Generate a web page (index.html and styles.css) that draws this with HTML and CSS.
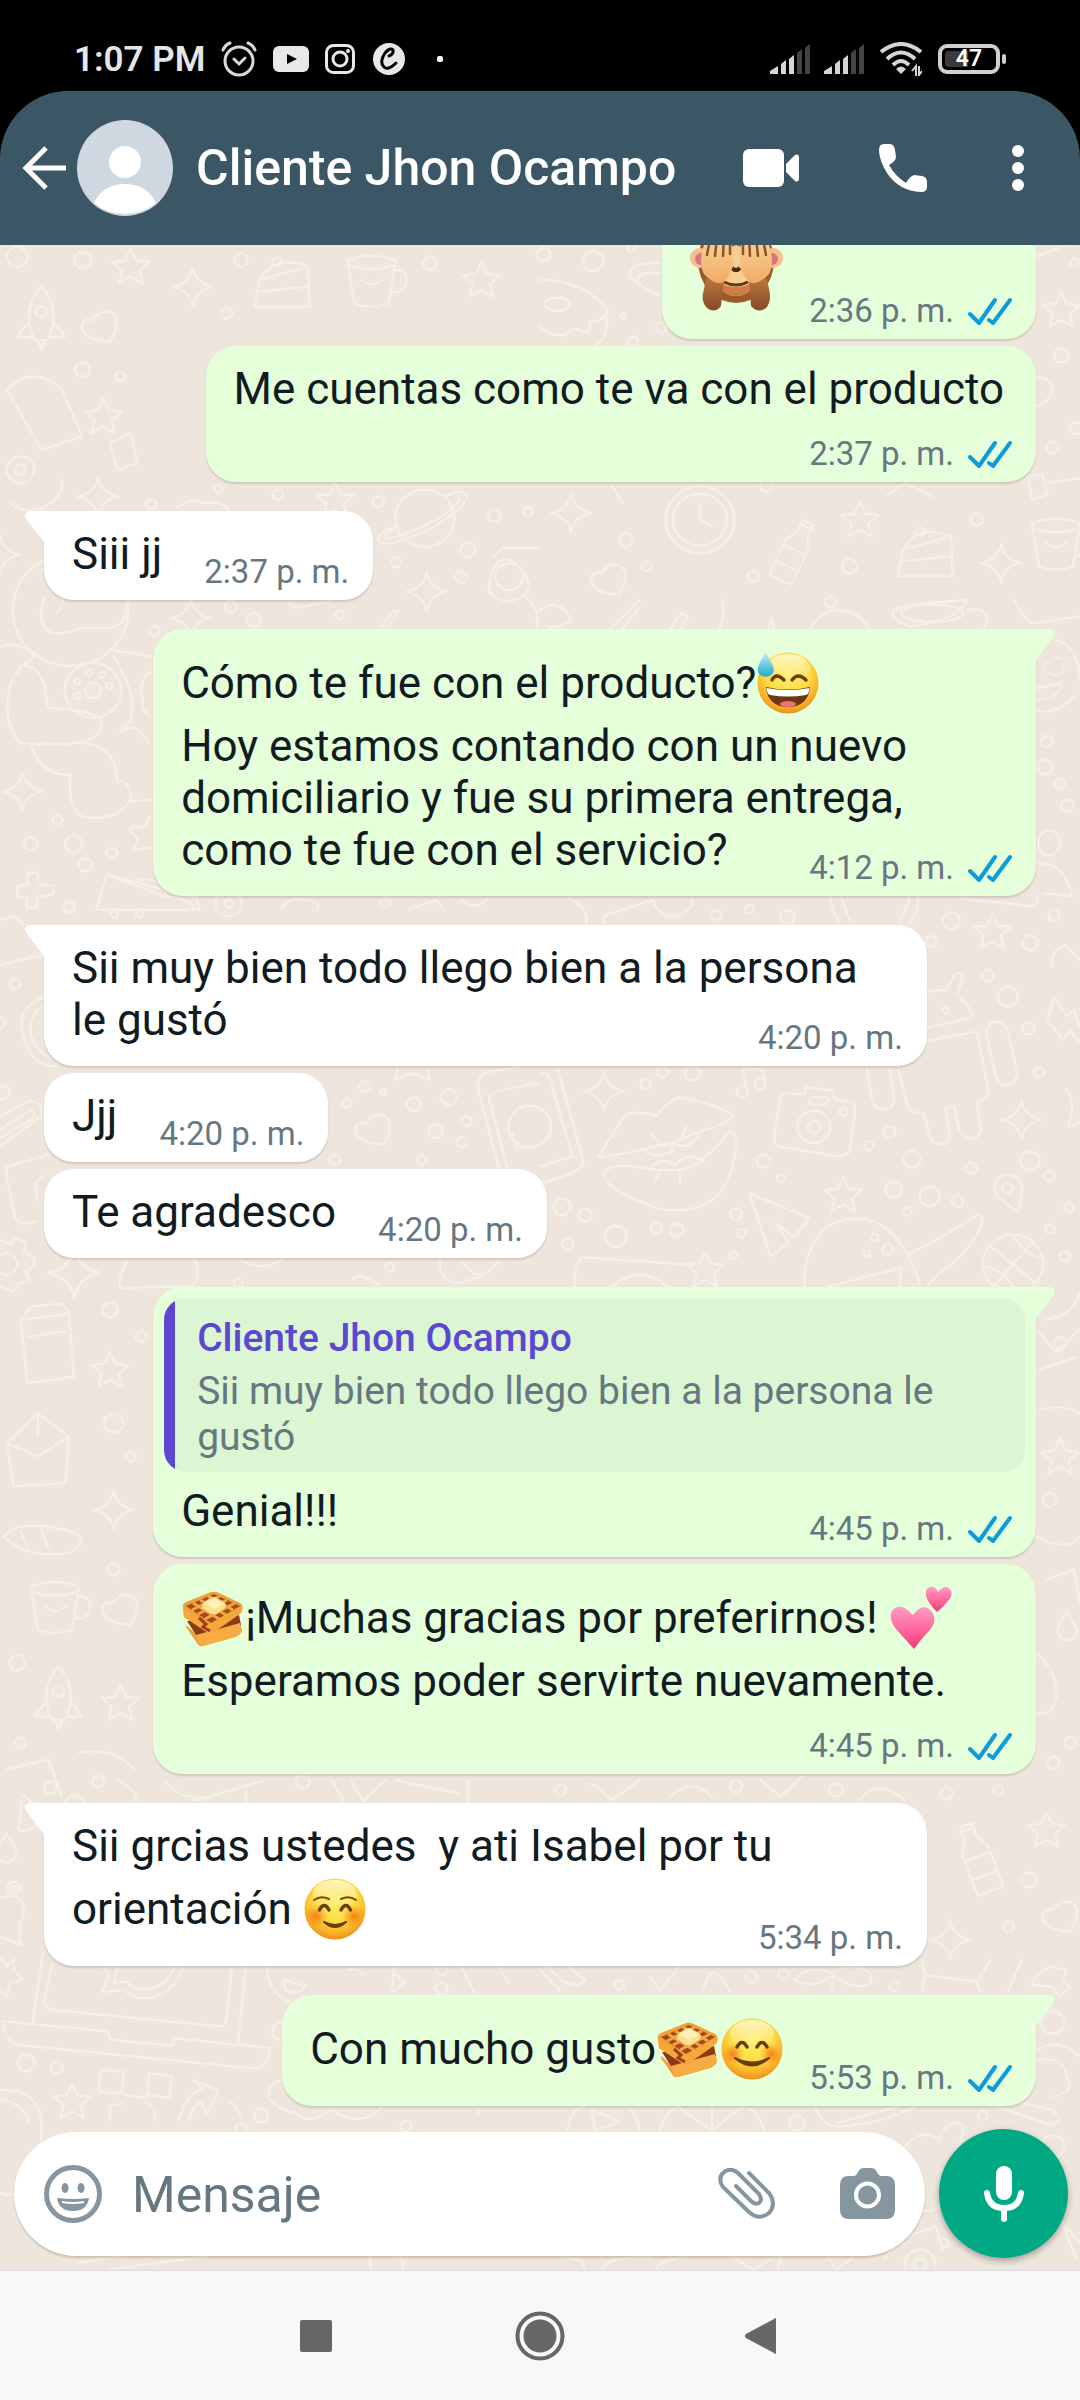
FILE: index.html
```html
<!DOCTYPE html>
<html lang="es">
<head>
<meta charset="utf-8">
<meta name="viewport" content="width=device-width, initial-scale=1">
<title>Cliente Jhon Ocampo</title>
<link rel="stylesheet" href="styles.css">
</head>
<body>
<svg class="sprite" aria-hidden="true">
  <defs>
    <radialGradient id="face" cx=".5" cy=".35" r=".65">
      <stop offset="0" stop-color="#fdf06a"/><stop offset=".55" stop-color="#fcdc42"/><stop offset=".85" stop-color="#f9ae26"/><stop offset="1" stop-color="#ee8d1c"/>
    </radialGradient>
    <linearGradient id="shine" x1="0" y1="0" x2="0" y2="1">
      <stop offset="0" stop-color="#fff6cf" stop-opacity=".9"/><stop offset="1" stop-color="#fff6cf" stop-opacity="0"/>
    </linearGradient>
    <radialGradient id="cheek"><stop offset="0" stop-color="#f4660c" stop-opacity=".75"/><stop offset="1" stop-color="#f4760c" stop-opacity="0"/></radialGradient>
    <linearGradient id="drop" x1="0" y1="0" x2="0" y2="1"><stop offset="0" stop-color="#bfeff5"/><stop offset="1" stop-color="#22a9cf"/></linearGradient>
    <linearGradient id="pink" x1="0" y1="0" x2="0" y2="1"><stop offset="0" stop-color="#ff9cc4"/><stop offset=".6" stop-color="#fd6299"/><stop offset="1" stop-color="#ee3873"/></linearGradient>
    <linearGradient id="arm" x1="0" y1="0" x2="0" y2="1"><stop offset="0" stop-color="#b9753c"/><stop offset="1" stop-color="#874a28"/></linearGradient>
    <linearGradient id="hand" x1="0" y1="0" x2="0" y2="1"><stop offset="0" stop-color="#fbd29a"/><stop offset="1" stop-color="#f0ac66"/></linearGradient>
    <symbol id="head" viewBox="0 0 64 74">
      <circle cx="32" cy="37" r="30.5" fill="url(#face)"/>
      <ellipse cx="32" cy="22" rx="22" ry="14" fill="url(#shine)"/>
    </symbol>
    <symbol id="e-sweat" viewBox="0 0 64 74">
      <use href="#head"/>
      <path d="M16 34Q20 26 28 34M36 34Q42 26 50 34" fill="none" stroke="#6b3d06" stroke-width="3.4" stroke-linecap="round"/>
      <path d="M10 41Q32 46 54 41Q52 61 32 61Q12 61 10 41Z" fill="#6a3710"/>
      <path d="M10.500 42Q32 46 53.500 42Q53 48 50 49Q32 52 14 49Q11 48 10.500 42Z" fill="#fff"/>
      <ellipse cx="32" cy="58" rx="8" ry="3" fill="#f0707a"/>
      <path d="M9.500 6.500Q18 20 18 24A8.300 7.500 0 0 1 1.500 24Q1.500 19 9.500 6.500Z" fill="url(#drop)"/>
    </symbol>
    <symbol id="e-blush" viewBox="0 0 64 74">
      <use href="#head"/>
      <circle cx="13" cy="42" r="11" fill="url(#cheek)"/><circle cx="51" cy="42" r="11" fill="url(#cheek)"/>
      <path d="M17 35Q22 26 27 35M37 35Q42 26 47 35" fill="none" stroke="#6b3d06" stroke-width="3.400" stroke-linecap="round"/>
      <path d="M15 46Q32 61 49 46Q32 55 15 46Z" fill="#6b3d06" stroke="#6b3d06" stroke-width="2" stroke-linejoin="round"/>
    </symbol>
    <symbol id="e-relaxed" viewBox="0 0 64 74">
      <use href="#head"/>
      <circle cx="13" cy="44" r="12" fill="url(#cheek)"/><circle cx="51" cy="44" r="12" fill="url(#cheek)"/>
      <path d="M11 28Q18 23 26 27M38 27Q46 23 53 28" fill="none" stroke="#7a4a08" stroke-width="2" stroke-linecap="round"/>
      <path d="M16.500 38Q21 29 26 38M38 38Q43 29 47.500 38" fill="none" stroke="#6b3d06" stroke-width="3.400" stroke-linecap="round"/>
      <path d="M21 50Q32 60 43 50Q32 56 21 50Z" fill="#6b3d06" stroke="#6b3d06" stroke-width="2" stroke-linejoin="round"/>
    </symbol>
    <symbol id="e-waffle" viewBox="0 0 64 74">
      <path d="M5 44L14 52L58 38L61 49Q60 54 54 56L22 65Q18 66 16 62L5 46Z" fill="#ef9f33"/>
      <path d="M6 40L40 40L58 34L60 44L24 56L15 54Z" fill="#8a3b12"/>
      <path d="M15 54L59 42L61 50Q58 55 54 56L22 65Q17 64 15 54Z" fill="#f6ac42"/>
      <path d="M2 27Q1 23 5 21L30 11Q34 10 38 12L59 22Q63 24 61 30L34 50Q30 54 25 50L3 36Z" fill="#f0a038"/>
      <path d="M5 25L33 13L59 25L30 42Z" fill="#a44a18"/>
      <path d="M12 22L38 38M19 19L45 34M27 15L52 29M11 29L39 15M17 33L46 19M24 38L54 22" stroke="#f2a746" stroke-width="3" fill="none"/>
      <path d="M2 27L29 43L61 25L61 31Q46 43 32 51Q28 53 24 50L3 36Z" fill="#f5a73c"/>
      <path d="M18 37L25 43L22 46L29 50" fill="none" stroke="#9b3f14" stroke-width="3"/>
      <path d="M22 22Q30 15 34 16L43 21Q46 23 44 27L35 33Q31 34 27 31L21 27Z" fill="#fbe08e"/><path d="M23 22L33 17L43 23L33 28Z" fill="#fff0b8"/>
    </symbol>
    <symbol id="e-hearts" viewBox="0 0 64 74">
      <path d="M25 68Q15 57 7 48Q-1 38 3 30Q11 20 24 34Q34 20 43 31Q49 40 40 50Q32 58 25 68Z" fill="url(#pink)"/>
      <path d="M48 31Q39 22 37 15Q36 7 41 6Q46 5 49 11Q56 3 61 8Q65 13 59 20Q54 26 48 31Z" fill="url(#pink)"/>
    </symbol>
    <symbol id="e-monkey" viewBox="0 -6 94 106">
      <ellipse cx="46" cy="42" rx="38" ry="42" fill="#9a5a2c"/>
      <circle cx="10" cy="39" r="10" fill="#f4c08c"/><circle cx="83" cy="39" r="10" fill="#f4c08c"/>
      <circle cx="11" cy="40" r="6" fill="#d9737c"/><circle cx="82" cy="40" r="6" fill="#d9737c"/>
      <path d="M46 26Q66 32 65 62Q60 77 46 77Q32 77 28 62Q27 34 46 26Z" fill="#f5cf92"/>
      <path d="M30 64Q46 72 62 64Q60 77 46 77Q32 77 30 64Z" fill="#cf7f45"/>
      <path d="M34 63Q46 69 58 63" fill="none" stroke="#6b3312" stroke-width="3"/>
      <path d="M42 49Q46 53 50 49" fill="none" stroke="#4a2a15" stroke-width="4"/>
      <path d="M16 60L34 62L31 87Q25 95 17 89Q10 82 14 70Z" fill="url(#arm)"/>
      <path d="M77 60L59 62L61 87Q68 95 76 89Q82 82 79 70Z" fill="url(#arm)"/>
      <path d="M14 26Q28 12 42 26Q46 46 39 56Q35 64 30 64Q22 64 14 55Q8 44 14 26Z" fill="url(#hand)"/>
      <path d="M79 26Q65 12 51 26Q47 46 54 56Q58 64 63 64Q71 64 79 55Q85 44 79 26Z" fill="url(#hand)"/>
      <path d="M20 20L17 36M27 18L25 37M34 18L33 37M40 21L40 35M73 20L76 36M66 18L68 37M59 18L60 37M53 21L53 35" fill="none" stroke="#8e5426" stroke-width="2.500" stroke-linecap="round"/>
    </symbol>
    <symbol id="ticks" viewBox="0 0 44 28">
      <path d="M2 17L11 26L27 3M21 23L25 26L42 3" fill="none" stroke="#0d9bdb" stroke-width="4" stroke-linecap="round" stroke-linejoin="round"/>
    </symbol>
    <symbol id="tail" viewBox="0 0 20 32">
      <path d="M20 0H5Q-3 1 2 9L19 31H20Z" fill="currentColor"/>
    </symbol>
    <symbol id="bars" viewBox="0 0 40 30">
      <path d="M0 30V27L8 22V30ZM11 30V20L16 16V30ZM19 30V15L24 11V30Z" fill="#d6d6d6"/>
      <path d="M27 30V9L32 5V30ZM35 30V4L40 0V30Z" fill="#444"/>
    </symbol>
    <path id="s4" d="M0-58Q8-12 58 0Q10 8 0 58Q-8 12-58 0Q-10-8 0-58Z"/>
    <path id="s5" d="M0-54L16-18L54-14L25 12L34 50L0 30L-34 50L-25 12L-54-14L-16-18Z"/>
    <path id="ht" d="M30 45Q-50 40-52 0Q-50-28-20-20Q0-55 35-40Q65-20 30 45Z"/>
    <path id="dropshape" d="M0-45Q28 0 28 15A28 28 0 0 1-28 15Q-28 0 0-45Z"/>
    <g id="planet"><circle r="86"/><path d="M-80 25Q-150 45-130 72Q-110 90 20 30Q130-40 122-70Q110-92 60-65M-95 35Q-125 55-110 60Q-70 60 30 5Q105-40 100-60"/></g>
    <g id="cup"><path d="M-70-60L-50 70Q0 90 50 70L70-60Q0-85-70-60ZM-68-45Q0-20 68-45M65-30Q110-35 100 15Q85 45 55 35M-30 0Q0 25 30 0"/></g>
    <g id="bottle"><path d="M-40 110L-40-20L-18-60V-100H18V-60L40-20V110ZM-40 0H40M-40 60H40M-22-85H22"/></g>
    <g id="cake"><path d="M-80 70L-65-10L75-50L80 70ZM-65-10Q-20-90 75-50M-72 25L78 10"/><circle cx="-15" cy="-65" r="12"/></g>
    <g id="rocket"><path d="M-20 70Q-60-20 0-90Q60-20 20 70ZM-38 20L-70 60L-25 62M38 20L70 60L25 62M-10 72L0 100L10 72"/><circle cy="-15" r="16"/></g>
  </defs>
</svg>

<div class="screen">
  <div class="statusbar">
    <div class="statusbar__side">
      <span class="clock">1:07 PM</span>
      <svg class="alarm" viewBox="0 0 36 36" fill="none" stroke="#d8d8d8" stroke-width="3" stroke-linecap="round"><circle cx="18" cy="20" r="14"/><path d="M13 18L18 23L24 17M2 9Q4 4 9 2M34 9Q32 4 27 2"/></svg>
      <svg class="youtube" viewBox="0 0 36 26"><rect width="36" height="26" rx="6" fill="#e8e8e8"/><path d="M14 8L24 13L14 18Z" fill="#000"/></svg>
      <svg class="insta" viewBox="0 0 30 30" fill="none" stroke="#e8e8e8" stroke-width="3"><rect x="1.500" y="1.500" width="27" height="27" rx="7"/><circle cx="15" cy="15" r="7"/><circle cx="23" cy="7" r="1" stroke-width="2"/></svg>
      <svg class="brand" viewBox="0 0 32 32"><circle cx="16" cy="16" r="16" fill="#e8e8e8"/><path d="M16 13Q21 11 20 7Q17 4 12 10Q6 19 11 24Q15 28 23 20" fill="none" stroke="#000" stroke-width="3" stroke-linecap="round"/></svg>
      <span class="more-dot"></span>
    </div>
    <div class="statusbar__side">
      <svg class="signal" viewBox="0 0 40 30"><use href="#bars"/></svg>
      <svg class="signal" viewBox="0 0 40 30"><use href="#bars"/></svg>
      <svg class="wifi" viewBox="0 0 42 34" fill="none" stroke="#d6d6d6" stroke-width="4"><path d="M1 10Q21-6 41 10M7 17Q21 4 35 17M13 23Q21 15 29 23"/><path d="M16 27Q21 22 26 27L21 32Z" fill="#d6d6d6" stroke="none"/><path d="M36 34V24L32 29M39 24V33L42 29" stroke-width="2"/></svg>
      <span class="battery"><span class="battery__level">47</span></span>
    </div>
  </div>

  <header class="header">
    <button class="icon-btn" type="button" aria-label="Atrás"><svg class="back" viewBox="0 0 44 44" fill="none" stroke="#fff" stroke-width="5"><path d="M44 22H4M24 2L4 22L24 42"/></svg></button>
    <svg class="avatar" viewBox="0 0 96 96" role="img" aria-label="Foto de perfil"><circle cx="48" cy="48" r="48" fill="#cfd8e0"/><circle cx="48" cy="42" r="16" fill="#fff"/><path d="M17 83Q26 64 48 64Q70 64 79 83Q66 94 48 94Q30 94 17 83Z" fill="#fff"/></svg>
    <h1 class="title">Cliente Jhon Ocampo</h1>
    <div class="actions">
      <button class="icon-btn" type="button" aria-label="Videollamada"><svg class="video" viewBox="0 0 56 38" fill="#fff"><rect width="41" height="38" rx="6"/><path d="M43 15L52 6Q56 4 56 9V29Q56 34 52 32L43 23Z"/></svg></button>
      <button class="icon-btn" type="button" aria-label="Llamar"><svg class="call" viewBox="0 0 48 48" fill="#fff"><path d="M5 0H11Q15 0 16 6L17 13Q17 17 10 21Q16 32 27 39Q31 32 35 31L43 32Q48 33 48 38V43Q48 48 42 48Q20 47 8 29Q0 16 0 6Q0 0 5 0Z"/></svg></button>
      <button class="icon-btn" type="button" aria-label="Más opciones"><svg class="dots" viewBox="0 0 12 46" fill="#fff"><circle cx="6" cy="6" r="6"/><circle cx="6" cy="23" r="6"/><circle cx="6" cy="40" r="6"/></svg></button>
    </div>
  </header>

  <main class="wall">
    <svg class="doodles" viewBox="0 245 1080 2025" preserveAspectRatio="xMidYMin slice" aria-hidden="true">
      <g transform="translate(0 230) scale(.344 .333)">
        <circle cx="50" cy="80" r="30"/><circle cx="240" cy="90" r="24"/><use href="#s5" x="380" y="110"/><use href="#s4" x="560" y="170"/><use href="#cake" x="820" y="160"/><circle cx="700" cy="90" r="20"/><use href="#cup" x="1080" y="150"/><circle cx="1250" cy="100" r="20"/><use href="#s5" x="1400" y="150"/><circle cx="660" cy="250" r="16"/>
        <use href="#rocket" x="120" y="260"/><use href="#ht" x="290" y="290"/><circle cx="240" cy="420" r="22"/><path d="M20 480Q100 400 180 480L240 620L120 660Z"/><use href="#s5" x="300" y="560"/><circle cx="350" cy="440" r="14"/><path d="M320 640L380 610L400 700L340 720Z"/><circle cx="60" cy="720" r="40"/><circle cx="60" cy="720" r="16"/>
      </g>
      <g transform="translate(540 230) scale(.344 .333)">
        <circle cx="155" cy="93" r="30"/><circle cx="10" cy="73" r="20"/><circle cx="265" cy="52" r="12"/><circle cx="242" cy="257" r="8"/><circle cx="352" cy="293" r="15"/><circle cx="270" cy="335" r="15"/>
        <path d="M0 150Q130 150 195 240Q200 330 160 345M195 240Q190 275 145 275Q150 320 115 300Q90 290 75 315Q30 320 0 290"/><ellipse cx="50" cy="223" rx="36" ry="20"/><path d="M350 100Q250 95 262 140Q290 170 355 200M350 130Q280 125 285 145"/>
        <use href="#s5" x="1515" y="240"/><circle cx="1515" cy="377" r="21"/><circle cx="1553" cy="97" r="12"/><circle cx="1490" cy="653" r="18"/><circle cx="1558" cy="595" r="18"/><path d="M1440 445Q1490 440 1490 480Q1480 520 1440 530M1443 80L1530 45"/>
        <circle cx="658" cy="768" r="18"/><path d="M1010 795L1060 760L1140 800M1420 740L1460 735L1475 795L1430 810ZM1475 760L1568 745M210 770L240 820"/>
        <circle cx="465" cy="870" r="100"/><circle cx="465" cy="870" r="78"/><path d="M465 820V870L500 890"/><use href="#s4" x="90" y="850"/><circle cx="250" cy="930" r="20"/><circle cx="310" cy="1010" r="14"/><use href="#ht" x="200" y="1050"/><use href="#bottle" transform="translate(740 960) rotate(25) scale(.900)"/><circle cx="620" cy="1040" r="16"/><use href="#s5" x="930" y="870"/><circle cx="900" cy="1010" r="22"/><use href="#cake" x="1120" y="970"/><circle cx="1270" cy="870" r="18"/><use href="#s4" x="1340" y="1000"/><use href="#cup" x="1500" y="940"/>
      </g>
      <g transform="translate(0 480) scale(.344 .333)">
        <use href="#planet" x="1235" y="115"/><use href="#s5" x="975" y="60"/><use href="#s4" x="1240" y="335"/><use href="#s4" x="555" y="415"/><use href="#s4" x="65" y="935"/><use href="#s4" x="285" y="50"/><use href="#s4" x="0" y="225"/>
        <circle cx="635" cy="27" r="12"/><circle cx="808" cy="44" r="15"/><circle cx="440" cy="72" r="14"/><circle cx="1100" cy="65" r="16"/><circle cx="1437" cy="108" r="18"/><circle cx="1535" cy="95" r="14"/><circle cx="1360" cy="210" r="22"/><circle cx="1152" cy="247" r="15"/><circle cx="1340" cy="292" r="17"/><circle cx="670" cy="380" r="17"/><circle cx="737" cy="420" r="20"/><circle cx="987" cy="404" r="13"/><circle cx="450" cy="454" r="15"/>
        <path d="M30 70Q60 100 120 85Q190 50 180 0M510 85Q560 50 590 70Q640 60 665 90M840 370L860 385L960 365M1130 440L1160 390L1140 395L1110 440M1435 230L1460 205H1568M1450 245Q1405 310 1430 345Q1480 385 1530 340Q1550 310 1510 265Q1480 225 1450 245M1520 345Q1570 380 1560 440"/>
        <circle cx="1480" cy="290" r="40"/>
        <circle cx="205" cy="390" r="168"/><path d="M130 350Q100 430 150 460Q180 465 240 445H310Q370 440 365 375M165 400Q190 370 180 350M0 500Q60 480 100 530M320 510L445 530M100 530Q30 580 25 640Q10 740 60 790Q180 800 240 785Q300 770 295 720Q270 690 140 685L130 620Q110 550 60 560"/>
        <circle cx="270" cy="632" r="82"/><circle cx="270" cy="632" r="23"/><circle cx="225" cy="605" r="9"/><circle cx="298" cy="585" r="9"/><circle cx="318" cy="618" r="9"/><circle cx="225" cy="648" r="9"/><circle cx="258" cy="578" r="9"/>
        <path d="M330 530Q400 640 380 720L350 755Q400 720 430 790M90 795Q120 890 205 885Q195 990 240 1010Q340 1030 380 960Q380 900 340 905Q340 800 240 790M380 965L445 960M440 575Q400 600 415 660Q405 690 440 710"/>
        <circle cx="168" cy="1020" r="14"/><circle cx="90" cy="1092" r="20"/><circle cx="214" cy="1093" r="25"/><circle cx="325" cy="1120" r="16"/><circle cx="247" cy="1155" r="20"/><path d="M375 1045L420 1040L435 1010M375 1045L400 1080L390 1110L440 1105M80 1180H110V1215L155 1220V1245L110 1250L105 1285H78V1255L50 1250V1220L80 1215ZM310 1185L280 1290H580L570 1255ZM310 1185L480 1250M400 1200Q470 1190 485 1250Q540 1250 570 1290"/><circle cx="665" cy="1272" r="38"/><circle cx="665" cy="1272" r="12"/>
        <path d="M820 1290Q830 1250 890 1260Q940 1270 920 1290M1190 1290L1270 1260L1290 1290M1340 1260Q1380 1300 1420 1255"/><circle cx="1120" cy="1270" r="14"/>
      </g>
      <g transform="translate(540 600) scale(.344 .333)">
        <path d="M0 30Q60 -10 90 60Q50 90 20 80M205 85L290 0M290 20L240 85M410 40L380 85M410 40L430 50L410 85M530 0Q540 50 520 85M665 85L672 50L680 85M785 85Q820 30 870 30Q930 35 955 85M1240 0Q1220 60 1080 80Q1010 60 1030 30Q1060 10 1240 0M1240 30Q1300 20 1300 60L1290 85M1380 0Q1400 50 1430 70L1568 50"/>
        <ellipse cx="1140" cy="40" rx="90" ry="26"/><circle cx="845" cy="5" r="16"/>
        <path d="M1500 120Q1568 140 1568 240M1440 330Q1500 350 1550 290M1445 265L1515 250Q1510 300 1445 300"/><use href="#ht" transform="translate(1495 200) scale(.6)"/>
        <circle cx="1473" cy="425" r="17"/><circle cx="1468" cy="502" r="22"/><circle cx="1510" cy="552" r="15"/><circle cx="1533" cy="617" r="18"/><ellipse cx="1480" cy="730" rx="32" ry="38"/>
        <path d="M1450 790Q1530 790 1545 890L1465 880M1220 895L1435 920Q1450 910 1445 890M190 970Q170 950 210 940L330 900Q340 950 390 950Q440 940 445 895M845 890Q850 940 870 970M1100 890Q1100 940 1075 970M875 890Q885 930 905 965M1075 890Q1065 930 1045 965M80 895Q140 920 135 970"/>
      </g>
      <g transform="translate(0 900) scale(.344 .333)">
        <circle cx="202" cy="22" r="16"/><circle cx="332" cy="43" r="10"/><circle cx="405" cy="43" r="10"/><circle cx="45" cy="252" r="15"/><circle cx="0" cy="368" r="14"/><circle cx="8" cy="578" r="20"/><path d="M125 165L0 195M130 290Q50 320 65 400Q90 500 160 500M128 320Q80 340 90 410Q110 460 140 470M0 60L40 50L70 75"/>
        <path d="M0 650L80 605Q125 600 120 650L0 740M0 690L90 630Q110 640 90 660L0 715M20 800L140 765M20 800Q15 830 30 880L45 960Q60 980 105 965M130 830Q90 840 110 900M560 1075Q590 1110 560 1160L350 1165Q340 1140 370 1080M700 1080Q760 1120 820 1080M1280 1080Q1270 1150 1340 1150L1400 1130M1340 1080Q1400 1170 1450 1080M1025 1140Q1040 1115 1100 1155"/>
        <circle cx="1060" cy="560" r="16"/><circle cx="1114" cy="577" r="8"/><circle cx="1008" cy="610" r="13"/><circle cx="1202" cy="613" r="20"/><circle cx="1304" cy="592" r="23"/><circle cx="1357" cy="664" r="15"/><circle cx="1267" cy="695" r="20"/><circle cx="1342" cy="727" r="14"/><circle cx="974" cy="780" r="15"/><circle cx="1226" cy="781" r="14"/><circle cx="1133" cy="1103" r="13"/><circle cx="692" cy="1150" r="13"/><use href="#ht" x="1085" y="690"/><path d="M1155 505L1150 540L1200 520L1250 540L1240 505M1450 805L1390 570Q1385 520 1430 515L1568 490M1475 805L1420 590Q1420 575 1568 550"/><circle cx="1540" cy="680" r="62"/><path d="M1490 700L1500 745L1540 740"/>
        <circle cx="18" cy="1093" r="32"/><path d="M0 1020L30 1035L45 1015L75 1030L70 1060L100 1075V1100L75 1115L85 1145L55 1150L40 1175L0 1160"/><use href="#s4" transform="translate(215 1120) scale(1.300)"/>
      </g>
      <g transform="translate(540 900) scale(.344 .333)">
        <path d="M168 772L245 650Q265 630 340 648Q380 590 415 595Q490 605 560 645Q560 670 450 700Q400 730 300 748Q240 765 168 772ZM186 825Q190 795 260 798Q400 830 460 790Q520 740 545 700Q565 680 572 730Q560 830 520 885Q450 950 340 925Q190 870 186 825ZM300 748Q330 780 385 755Q380 730 385 730Q430 755 460 710M320 700L350 735M425 680L412 720M325 800Q355 770 395 795Q430 750 475 785M350 810L335 848M405 815L408 850"/>
        <path d="M700 585Q705 578 768 583L772 562L850 572L858 600L910 608Q918 612 915 640L900 755Q895 770 860 768L690 740Q680 735 682 700Z"/><circle cx="796" cy="681" r="48"/><circle cx="796" cy="681" r="18"/><circle cx="882" cy="636" r="12"/><rect x="782" y="592" width="55" height="22" rx="10"/>
        <path d="M950 505L965 600Q975 635 1010 628Q1030 620 1030 590L1015 500M1040 500L1070 625Q1080 642 1115 640L1135 715Q1150 740 1180 733Q1195 720 1190 700L1178 625L1205 620L1220 695Q1235 722 1265 715Q1285 700 1280 680L1270 605Q1305 600 1303 570L1270 395L1125 422M1297 400Q1300 365 1330 365Q1355 370 1360 395L1388 520Q1385 555 1350 557Q1330 550 1325 530ZM1125 275L1180 270L1205 225Q1225 210 1228 235L1213 285Q1260 330 1258 352L1125 385"/><circle cx="1179" cy="331" r="9"/>
        <use href="#s5" x="1315" y="95"/><use href="#s5" x="882" y="885"/><use href="#s5" x="480" y="1110"/><use href="#s4" x="185" y="575"/><use href="#s4" x="1400" y="660"/>
        <path d="M1495 290L1475 360L1522 420L1540 390L1568 430M1495 290L1530 350L1552 330L1568 380M1490 200Q1480 150 1530 135L1568 180M1390 938L1330 890Q1305 845 1350 825Q1400 825 1402 870ZM608 880L783 955Q760 990 738 1012L685 970L722 1030L670 1070ZM770 1160Q760 1060 830 985Q900 935 980 970Q1060 1010 1105 1155M1075 1062Q1180 1010 1270 945Q1295 945 1280 985Q1230 1080 1160 1120L1130 1155M840 1160L1050 1105L1045 1160M590 510L600 575M590 510L645 505L655 550M100 1160Q100 1080 130 1073L430 1095M210 1160Q290 1090 370 1160M0 520Q30 520 35 560L95 770L0 800M50 500L127 790Q120 820 0 850M1530 570Q1560 610 1535 680L1568 670"/>
        <circle cx="1358" cy="866" r="15"/><circle cx="588" cy="575" r="17"/><circle cx="640" cy="552" r="16"/><circle cx="1375" cy="1093" r="88"/><path d="M1310 1040L1440 1150M1375 1005Q1400 1060 1464 1080M1430 1030L1320 1160M1290 1100Q1350 1110 1380 1170"/>
        <circle cx="512" cy="46" r="15"/><circle cx="609" cy="28" r="13"/><circle cx="719" cy="52" r="21"/><circle cx="1195" cy="63" r="25"/><circle cx="1137" cy="124" r="16"/><circle cx="1425" cy="129" r="22"/><circle cx="1494" cy="46" r="16"/><circle cx="1302" cy="228" r="18"/><circle cx="1360" cy="290" r="29"/><circle cx="1420" cy="386" r="18"/><circle cx="1451" cy="517" r="14"/><circle cx="355" cy="516" r="16"/><circle cx="443" cy="520" r="22"/><circle cx="307" cy="553" r="15"/><circle cx="1016" cy="697" r="17"/><circle cx="957" cy="738" r="13"/><circle cx="650" cy="784" r="20"/><circle cx="701" cy="836" r="12"/><circle cx="1081" cy="779" r="25"/><circle cx="1253" cy="806" r="17"/><circle cx="1425" cy="783" r="28"/><circle cx="1482" cy="829" r="15"/><circle cx="1028" cy="870" r="24"/><circle cx="1133" cy="890" r="29"/><circle cx="1213" cy="905" r="17"/><circle cx="1068" cy="936" r="12"/><circle cx="1538" cy="924" r="14"/><circle cx="64" cy="922" r="25"/><circle cx="131" cy="947" r="19"/><circle cx="570" cy="944" r="17"/><circle cx="338" cy="986" r="16"/><circle cx="398" cy="992" r="19"/><circle cx="220" cy="1010" r="31"/><circle cx="586" cy="1001" r="12"/><circle cx="80" cy="1034" r="17"/><circle cx="562" cy="1066" r="11"/><circle cx="973" cy="1013" r="11"/><circle cx="1011" cy="1050" r="15"/><circle cx="951" cy="1061" r="9"/><circle cx="1525" cy="1070" r="15"/><circle cx="1483" cy="988" r="14"/>
        <path d="M1445 1290L1500 1360L1568 1290M1470 1260Q1550 1250 1568 1180"/>
      </g>
      <g transform="translate(0 1270) scale(.344 .333)">
        <circle cx="410" cy="200" r="16"/><path d="M60 150L200 130L215 320L80 340ZM80 200L190 185M60 150L90 110L180 100L200 130"/><circle cx="320" cy="120" r="22"/><use href="#s5" x="320" y="300"/><path d="M20 520L110 430L200 500L190 640L40 650ZM110 430V500M20 520L110 560L200 500"/><circle cx="330" cy="460" r="28"/><circle cx="380" cy="560" r="14"/><path d="M10 800Q60 740 220 790Q260 820 200 850Q80 870 10 800M60 785L80 830M120 780L140 840"/><use href="#s4" x="330" y="720"/><use href="#cup" x="160" y="1010"/><circle cx="330" cy="900" r="18"/><use href="#ht" x="350" y="1020"/><use href="#rocket" x="170" y="1280"/><circle cx="50" cy="1180" r="22"/><use href="#s5" x="350" y="1300"/><circle cx="60" cy="1420" r="16"/><path d="M20 1500L140 1470L180 1580M230 1450Q330 1430 390 1500"/>
      </g>
      <g transform="translate(1036 1270) scale(.344 .333)">
        <circle cx="70" cy="220" r="18"/><path d="M10 300L120 260M10 420Q70 400 128 430"/><use href="#s5" x="70" y="560"/><circle cx="40" cy="690" r="20"/><path d="M0 800Q90 850 128 800M30 930L110 900L128 1000M0 1150Q60 1200 60 1280Q50 1340 0 1330"/><use href="#dropshape" x="90" y="1070"/><circle cx="100" cy="1420" r="16"/><circle cx="50" cy="1480" r="18"/>
      </g>
      <g transform="translate(926 1780) scale(.344 .333)">
        <circle cx="60" cy="40" r="18"/><use href="#bottle" transform="translate(150 230) rotate(-20)"/><use href="#s5" x="350" y="150"/><circle cx="300" cy="300" r="22"/><use href="#ht" x="390" y="410"/><use href="#s4" x="70" y="480"/><circle cx="240" cy="440" r="15"/><circle cx="210" cy="30" r="14"/>
      </g>
      <g transform="translate(540 1770) scale(.344 .333)">
        <circle cx="60" cy="60" r="16"/><path d="M150 40L210 90L290 30M380 80Q440 20 500 80M640 30L700 80L760 20"/><circle cx="570" cy="50" r="18"/><circle cx="860" cy="60" r="20"/><path d="M930 90Q980 20 1060 90"/>
      </g>
      <g transform="translate(0 1780) scale(.344 .333)">
        <circle cx="146" cy="23" r="18"/><circle cx="285" cy="5" r="17"/><path d="M340 0Q400 30 395 65M480 0Q510 60 610 50L770 0M610 50Q600 60 560 60M715 30V65M965 0L1000 65M1020 0L1055 65L1120 0M1150 0L1330 40M1360 0L1360 65M65 45L55 150Q80 160 110 130M65 45Q130 90 128 120M190 65Q215 30 245 65"/><circle cx="880" cy="5" r="20"/>
        <use href="#dropshape" x="20" y="205"/><circle cx="40" cy="325" r="19"/><circle cx="40" cy="325" r="7"/><path d="M0 355Q70 330 70 400Q50 440 60 495L0 470M0 535L20 560L40 535V570L65 600L30 610L20 650L0 635"/>
        <path d="M125 520L95 725M150 555L128 670Q130 685 150 690L640 740Q655 740 658 720L675 555M715 555L692 790M10 725L315 755L320 780L500 797L505 775L785 805Q780 860 740 867L50 795Q10 780 10 725Z"/><path d="M535 555Q500 660 410 655Q380 650 360 630L295 637L315 590L300 555M510 555Q480 630 410 630Q380 625 370 605L330 608L345 555"/>
        <path d="M775 555Q780 640 840 665M825 600L890 620Q860 650 830 630ZM1010 570Q1040 560 1055 585M1145 555L1140 640M1145 580L1175 605L1145 635M1340 555L1380 640M1450 560L1480 610"/><circle cx="1285" cy="570" r="16"/><circle cx="1283" cy="627" r="17"/>
        <circle cx="76" cy="850" r="25"/><circle cx="165" cy="864" r="18"/><use href="#s5" x="210" y="965"/><path d="M293 870L360 877L353 943L287 936ZM433 880L498 890L492 955L428 947ZM360 945L425 955M355 970L320 980V1020M420 965L450 990V1020M520 1020Q540 940 590 930L560 900L635 935L600 1005L585 965Q560 980 550 1020M665 970Q680 960 705 1020M820 900Q770 920 785 960Q810 990 860 1000Q900 1040 960 990Q1060 1050 1110 980"/><circle cx="758" cy="1008" r="20"/><circle cx="820" cy="755" r="28"/><path d="M0 930Q110 930 120 1020V1200Q60 1260 0 1240M0 960Q70 970 85 1030"/>
        <circle cx="320" cy="1200" r="14"/><circle cx="700" cy="1050" r="17"/><circle cx="1180" cy="1040" r="16"/><path d="M1390 980V1010M230 1450L590 1390L600 1430L320 1470M1080 1470Q1060 1420 1110 1400Q1180 1420 1170 1470"/>
      </g>
      <g transform="translate(540 1960) scale(.344 .333)">
        <path d="M0 30L60 95M60 0L130 60Q120 90 60 60L20 20M320 50L350 90L420 0M470 95L490 45Q520 20 550 95M740 60Q780 10 850 40Q900 0 960 40Q980 90 900 75L850 45Q800 90 740 60M850 45V95M1110 95L1120 45L1270 65L1280 95M1110 0L1120 45M1270 65L1310 0M1360 95L1400 0M1440 50L1480 20L1530 30L1520 60L1540 80L1510 110L1490 80L1430 75Z"/><circle cx="614" cy="50" r="17"/><circle cx="708" cy="42" r="15"/><circle cx="231" cy="74" r="14"/><circle cx="1029" cy="79" r="13"/><circle cx="1490" cy="188" r="34"/>
        <path d="M1445 270Q1510 230 1568 290M1445 300Q1530 290 1530 350Q1560 400 1490 410M80 512Q90 440 130 440M290 512Q280 450 250 440M150 450L235 485L160 512ZM350 512Q360 460 400 440M650 512Q640 460 600 440M400 440L500 512L590 440M500 440V512M860 490L1040 440M800 440Q820 500 870 500Q1000 490 1090 440M1370 420L1490 450Q1530 490 1480 495L1330 440"/><circle cx="748" cy="490" r="22"/><circle cx="1288" cy="467" r="14"/>
        <path d="M1060 560Q1110 500 1160 540Q1180 480 1225 490Q1240 540 1190 600M1100 750Q1140 760 1160 740M1070 830L1150 800L1170 870M1000 900Q1020 860 1060 850M180 930Q190 890 320 893M410 893Q330 910 340 930M700 893L690 930M840 893L860 930L910 893M560 893L620 930L680 893"/><circle cx="1105" cy="915" r="45"/><circle cx="1105" cy="915" r="18"/><circle cx="1176" cy="850" r="12"/><circle cx="1490" cy="560" r="34"/><path d="M1530 800L1568 850M1500 740L1560 900M80 893Q130 900 130 930"/>
      </g>
    </svg>

    <section class="chat" aria-label="Mensajes">
      <article class="bubble bubble--out">
        <p class="text text--inline"><svg class="emoji emoji--large" viewBox="0 0 94 106" role="img" aria-label="Mono tapándose los ojos"><use href="#e-monkey"/></svg></p>
        <p class="meta">2:36 p. m.<svg class="ticks" viewBox="0 0 44 28" role="img" aria-label="Leído"><use href="#ticks"/></svg></p>
      </article>
      <article class="bubble bubble--out bubble--stacked">
        <p class="text">Me cuentas como te va con el producto</p>
        <p class="meta">2:37 p. m.<svg class="ticks" viewBox="0 0 44 28" role="img" aria-label="Leído"><use href="#ticks"/></svg></p>
      </article>
      <article class="bubble bubble--in bubble--first">
        <svg class="tail" viewBox="0 0 20 32" aria-hidden="true"><use href="#tail"/></svg>
        <p class="text text--inline">Siii jj</p>
        <p class="meta">2:37 p. m.</p>
      </article>
      <article class="bubble bubble--out bubble--first">
        <svg class="tail" viewBox="0 0 20 32" aria-hidden="true"><use href="#tail"/></svg>
        <p class="text text--inline">Cómo te fue con el producto?<svg class="emoji" viewBox="0 0 64 74" role="img" aria-label="Sonrisa con sudor"><use href="#e-sweat"/></svg><br>Hoy estamos contando con un nuevo domiciliario y fue su primera entrega, como te fue con el servicio?</p>
        <p class="meta">4:12 p. m.<svg class="ticks" viewBox="0 0 44 28" role="img" aria-label="Leído"><use href="#ticks"/></svg></p>
      </article>
      <article class="bubble bubble--in bubble--first">
        <svg class="tail" viewBox="0 0 20 32" aria-hidden="true"><use href="#tail"/></svg>
        <p class="text text--inline">Sii muy bien todo llego bien a la persona le gustó</p>
        <p class="meta">4:20 p. m.</p>
      </article>
      <article class="bubble bubble--in">
        <p class="text text--inline">Jjj</p>
        <p class="meta">4:20 p. m.</p>
      </article>
      <article class="bubble bubble--in">
        <p class="text text--inline">Te agradesco</p>
        <p class="meta">4:20 p. m.</p>
      </article>
      <article class="bubble bubble--out bubble--first bubble--wide">
        <svg class="tail" viewBox="0 0 20 32" aria-hidden="true"><use href="#tail"/></svg>
        <blockquote class="quote">
          <p class="quote__name">Cliente Jhon Ocampo</p>
          <p class="quote__text">Sii muy bien todo llego bien a la persona le gustó</p>
        </blockquote>
        <p class="text text--inline">Genial!!!</p>
        <p class="meta">4:45 p. m.<svg class="ticks" viewBox="0 0 44 28" role="img" aria-label="Leído"><use href="#ticks"/></svg></p>
      </article>
      <article class="bubble bubble--out bubble--stacked bubble--wide">
        <p class="text"><svg class="emoji" viewBox="0 0 64 74" role="img" aria-label="Gofre"><use href="#e-waffle"/></svg>¡Muchas gracias por preferirnos! <svg class="emoji" viewBox="0 0 64 74" role="img" aria-label="Dos corazones"><use href="#e-hearts"/></svg><br>Esperamos poder servirte nuevamente.</p>
        <p class="meta">4:45 p. m.<svg class="ticks" viewBox="0 0 44 28" role="img" aria-label="Leído"><use href="#ticks"/></svg></p>
      </article>
      <article class="bubble bubble--in bubble--first">
        <svg class="tail" viewBox="0 0 20 32" aria-hidden="true"><use href="#tail"/></svg>
        <p class="text text--inline">Sii grcias ustedes&nbsp; y ati Isabel por tu orientación <svg class="emoji" viewBox="0 0 64 74" role="img" aria-label="Cara sonriente"><use href="#e-relaxed"/></svg></p>
        <p class="meta">5:34 p. m.</p>
      </article>
      <article class="bubble bubble--out bubble--first">
        <svg class="tail" viewBox="0 0 20 32" aria-hidden="true"><use href="#tail"/></svg>
        <p class="text text--inline">Con mucho gusto<svg class="emoji" viewBox="0 0 64 74" role="img" aria-label="Gofre"><use href="#e-waffle"/></svg><svg class="emoji" viewBox="0 0 64 74" role="img" aria-label="Sonrisa"><use href="#e-blush"/></svg></p>
        <p class="meta">5:53 p. m.<svg class="ticks" viewBox="0 0 44 28" role="img" aria-label="Leído"><use href="#ticks"/></svg></p>
      </article>
    </section>

    <form class="composer">
      <div class="composer__box">
        <button class="icon-btn" type="button" aria-label="Emojis"><svg class="smiley" viewBox="0 0 58 58" fill="#8696a0"><circle cx="29" cy="29" r="26.500" fill="none" stroke="#8696a0" stroke-width="5"/><ellipse cx="21" cy="23" rx="3.500" ry="5"/><ellipse cx="37" cy="23" rx="3.500" ry="5"/><path d="M13 33Q29 35 45 33Q43 46 29 46Q15 46 13 33Z"/><path d="M18 37Q29 39 40 37" fill="none" stroke="#fff" stroke-width="2"/></svg></button>
        <input class="field" type="text" placeholder="Mensaje" aria-label="Mensaje">
        <button class="icon-btn" type="button" aria-label="Adjuntar"><svg class="clip" viewBox="0 0 57 51" fill="none" stroke="#8696a0" stroke-width="4" stroke-linecap="round"><path d="M31 5L51 25Q59 36 51 45Q41 53 31 44L5 19Q-1 10 6 4Q13 -1 20 5L41 26Q45 32 41 35Q37 37 33 33L18 18"/></svg></button>
        <button class="icon-btn" type="button" aria-label="Cámara"><svg class="camera" viewBox="0 0 55 51"><path d="M9 8H14Q16 8 18 4Q20 0 24 0H31Q35 0 37 4Q39 8 41 8H46Q55 8 55 17V42Q55 51 46 51H9Q0 51 0 42V17Q0 8 9 8Z" fill="#8696a0"/><circle cx="27.500" cy="27" r="11.500" fill="none" stroke="#fff" stroke-width="4"/></svg></button>
      </div>
      <button class="mic" type="button" aria-label="Grabar mensaje de voz"><svg class="mic__icon" viewBox="0 0 40 56"><rect x="12" width="16" height="34" rx="8" fill="#fff"/><path d="M3 27Q5 42 20 42Q35 42 37 27M20 42V53" fill="none" stroke="#fff" stroke-width="6" stroke-linecap="round"/></svg></button>
    </form>
  </main>

  <nav class="navbar" aria-label="Sistema">
    <button class="icon-btn" type="button" aria-label="Recientes"><svg class="nav-icon" viewBox="0 0 50 50" fill="#666"><rect x="9" y="9" width="32" height="32" rx="2"/></svg></button>
    <button class="icon-btn" type="button" aria-label="Inicio"><svg class="nav-icon" viewBox="0 0 50 50" fill="#666"><circle cx="25" cy="25" r="22.500" fill="none" stroke="#666" stroke-width="4"/><circle cx="25" cy="25" r="16.500"/></svg></button>
    <button class="icon-btn" type="button" aria-label="Volver"><svg class="nav-icon" viewBox="0 0 50 50" fill="#666"><path d="M37 8V42Q37 44 35 42L7 27Q5 25 7 23L35 8Q37 6 37 8Z"/></svg></button>
  </nav>
</div>
</body>
</html>
```
FILE: styles.css
```css
* { box-sizing: border-box; }

body {
  margin: 0;
  background: #000;
  font-family: Roboto, "Liberation Sans", sans-serif;
  color: #111b21;
}

p, h1, blockquote { margin: 0; }

svg { display: block; flex: none; }

.sprite { position: absolute; width: 0; height: 0; }

.icon-btn {
  display: flex;
  padding: 0;
  border: 0;
  background: none;
}

.screen {
  display: flex;
  flex-direction: column;
  height: 100vh;
}

/* System status bar */
.statusbar {
  display: flex;
  justify-content: space-between;
  height: 91px;
  padding: 28px 74px 0;
}
.statusbar__side {
  display: flex;
  align-items: center;
  height: 62px;
  gap: 16px;
}
.clock {
  color: #e6e6e6;
  font-size: 35px;
  font-weight: 600;
}
.alarm { width: 36px; height: 36px; }
.youtube { width: 36px; height: 26px; }
.insta { width: 30px; height: 30px; }
.brand { width: 32px; height: 32px; margin-left: 2px; }
.more-dot {
  width: 6px;
  height: 6px;
  margin-left: 16px;
  border-radius: 2px;
  background: #fff;
}
.signal { width: 40px; height: 30px; }
.signal + .signal { margin-left: -2px; }
.wifi { width: 42px; height: 34px; }
.battery {
  position: relative;
  display: flex;
  width: 62px;
  height: 30px;
  margin-right: 6px;
  padding: 3px;
  border: 4px solid #d0d0d0;
  border-radius: 9px;
}
.battery::after {
  content: "";
  position: absolute;
  right: -10px;
  top: 6px;
  width: 4px;
  height: 10px;
  border-radius: 2px;
  background: #d0d0d0;
}
.battery__level {
  flex: 1;
  background: linear-gradient(90deg, #3a3a3a 47%, transparent 47%);
  border-radius: 4px;
  color: #fff;
  font-size: 23px;
  font-weight: 600;
  line-height: 16px;
  text-align: center;
}

/* Conversation header */
.header {
  display: flex;
  align-items: center;
  height: 154px;
  padding: 0 56px 0 22px;
  border-radius: 68px 68px 0 0;
  background: #3b5664;
  color: #fff;
}
.back { width: 44px; height: 44px; }
.avatar { width: 96px; height: 96px; margin-left: 11px; }
.title {
  flex: 1;
  margin-left: 23px;
  font-size: 50px;
  font-weight: 500;
  white-space: nowrap;
}
.actions { display: flex; align-items: center; gap: 80px; }
.actions .icon-btn:last-child { margin-left: 5px; }
.video { width: 56px; height: 38px; }
.call { width: 48px; height: 48px; }
.dots { width: 12px; height: 46px; }

/* Wallpaper */
.wall {
  position: relative;
  display: flex;
  flex: 1;
  flex-direction: column;
  min-height: 0;
  overflow: hidden;
  background: #eee6dd;
}
.doodles {
  position: absolute;
  inset: 0;
  width: 100%;
  height: 100%;
  fill: none;
  stroke: #f5efe9;
  stroke-width: 7;
  stroke-linejoin: round;
  stroke-linecap: round;
}

/* Messages */
.chat {
  position: relative;
  display: flex;
  flex: 1;
  flex-direction: column;
  justify-content: flex-end;
  min-height: 0;
  gap: 7px;
  padding: 0 44px 23px;
  overflow: hidden;
}
.bubble {
  position: relative;
  flex: none;
  max-width: 89%;
  padding: 17px 24px 10px 28px;
  border-radius: 30px;
  box-shadow: 0 2px 2px rgba(60, 40, 20, 0.16);
  font-size: 44px;
  line-height: 52px;
}
.bubble--in { align-self: flex-start; background: #fff; color: #fff; }
.bubble--out { align-self: flex-end; background: #e5ffda; color: #e5ffda; }
.bubble--wide { width: 89%; }
.bubble--first { margin-top: 22px; }
.bubble--in.bubble--first { border-top-left-radius: 0; }
.bubble--out.bubble--first { border-top-right-radius: 0; }

.tail {
  position: absolute;
  top: 0;
  left: -19px;
  width: 20px;
  height: 32px;
}
.bubble--out .tail { right: -19px; left: auto; transform: scaleX(-1); }

.text { margin-right: 4px; color: #111b21; }

/* Keeps room for the time beside the last line */
.text--inline::after {
  content: "";
  display: inline-block;
  width: 183px;
}
.bubble--out .text--inline::after { width: 224px; }

.emoji {
  display: inline-block;
  width: 64px;
  height: 74px;
  vertical-align: -22px;
}
.emoji--large { width: 94px; height: 106px; vertical-align: -24px; }

.meta {
  display: flex;
  align-items: center;
  justify-content: flex-end;
  gap: 14px;
  margin-top: -26px;
  color: #667781;
  font-size: 33px;
  line-height: 36px;
}
.bubble--stacked .text { margin-right: 8px; }
.bubble--stacked .meta { margin-top: 21px; }
.ticks { width: 44px; height: 28px; }

.quote {
  margin: -6px -13px 13px -17px;
  padding: 17px 22px 12px 33px;
  border-radius: 22px;
  background: linear-gradient(90deg, #5b47d1 11px, #dcf5d3 11px);
  color: #667781;
  font-size: 39px;
  line-height: 46px;
}
.quote__name {
  margin-bottom: 7px;
  color: #5b47d1;
  font-weight: 500;
}

/* Message composer */
.composer {
  position: relative;
  display: flex;
  align-items: center;
  gap: 14px;
  padding: 0 12px 12px 14px;
}
.composer__box {
  display: flex;
  flex: 1;
  align-items: center;
  min-width: 0;
  height: 124px;
  padding: 0 30px;
  border-radius: 62px;
  background: #fff;
  box-shadow: 0 2px 2px rgba(60, 40, 20, 0.2);
}
.smiley { width: 58px; height: 58px; }
.field {
  flex: 1;
  min-width: 0;
  margin: 0 30px;
  padding: 2px 0 0;
  border: 0;
  outline: 0;
  background: none;
  color: #111b21;
  font-family: inherit;
  font-size: 50px;
  line-height: 60px;
}
.field::placeholder { color: #667781; opacity: 1; }
.clip { width: 57px; height: 51px; margin-right: 65px; }
.camera { width: 55px; height: 51px; }
.mic {
  display: flex;
  flex: none;
  align-items: center;
  justify-content: center;
  width: 129px;
  height: 129px;
  padding: 0;
  border: 0;
  border-radius: 50%;
  background: #00a884;
  box-shadow: 0 3px 6px rgba(0, 0, 0, 0.3);
}
.mic__icon { width: 40px; height: 56px; }

/* System navigation */
.navbar {
  display: flex;
  align-items: center;
  justify-content: center;
  gap: 174px;
  height: 130px;
  border-top: 1px solid #d9dde1;
  background: #f7f8fa;
}
.nav-icon { width: 50px; height: 50px; }
```
